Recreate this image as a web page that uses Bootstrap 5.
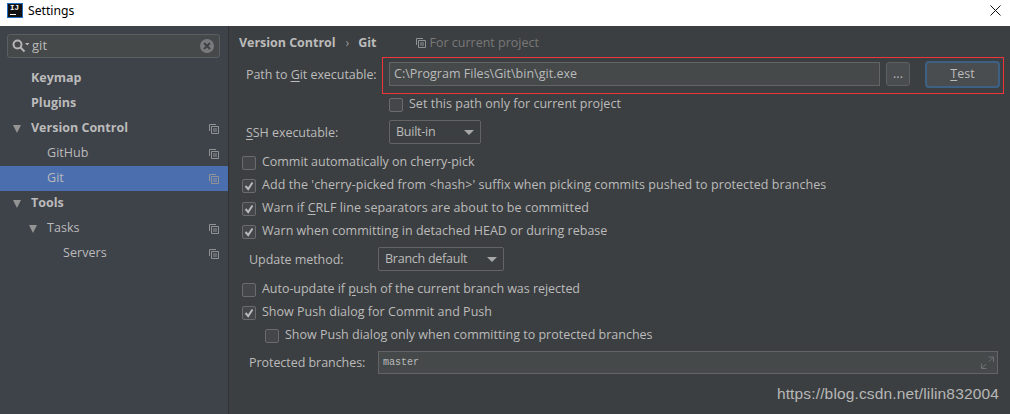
<!DOCTYPE html>
<html lang="en">
<head>
<meta charset="utf-8">
<title>Settings</title>
<link href="https://cdn.jsdelivr.net/npm/bootstrap@5.3.0/dist/css/bootstrap.min.css" rel="stylesheet">
<style>
html,body{width:1010px;height:414px;overflow:hidden;margin:0;background:#3c3f41;font-family:"Open Sans","Noto Sans",sans-serif;font-size:12.5px;color:#bbb;letter-spacing:.02px}
u{text-underline-offset:2px}
.win{width:1010px;height:414px}
.titlebar{height:26px;background:#fff;color:#000;padding:0 0 5px 7px;font-size:12.2px;font-family:"Noto Sans",sans-serif;letter-spacing:0}
.titletext{margin-top:2px}
.ijlogo{width:16px;height:15px;background:#111;border:1px solid #1f6fc4;color:#fff;font:bold 7.5px/8px "Liberation Mono",monospace;padding-left:2px;margin-right:5px;letter-spacing:0}
.ijlogo i{display:block;width:6px;height:1px;background:#fff;margin-top:2px}
.xbtn{margin-left:auto;margin-right:9px;width:11px;height:11px}
.body-row{height:388px}
.side{width:229px;background:#3e4249;border-right:1px solid #323232;flex:none}
.searchbox{margin:8px 8px 8px 7px;height:24px;width:213px;background:#45494a;border:1px solid #5c5f61;border-radius:3px;padding:0 5px 0 4px;font-size:13px}
.searchbox span{margin-left:3px}
.clr{margin-left:auto}
.tree-row{height:25px;padding-right:9px;letter-spacing:.05px}
.tree-row.bold{font-weight:700;letter-spacing:0}
.tree-row.sel{background:#4b6eaf}
.tw{width:31px;padding-left:13px;flex:none}
.tw2{width:47px;padding-left:29px;flex:none}
.tw3{width:63px;flex:none}
.proj{margin-left:auto}
.tri{width:0;height:0;border-left:4.5px solid transparent;border-right:4.5px solid transparent;border-top:8px solid #949494;display:block}
.mainp{flex:1;padding:0 7px 0 10px;min-width:0}
.crumb{height:31px;font-weight:700;padding-top:3px;letter-spacing:-.03px}
.crumb .sep{font-weight:400;margin:0 9px 0 10px;color:#999}
.crumb .forp{font-weight:400;color:#787878;margin-left:40px;letter-spacing:0}
.crumb .forp svg{margin-right:3px}
.pathrow{height:37px;padding-left:7px}
.pathlabel{width:136px;flex:none;letter-spacing:-.05px}
.redbox{flex:1;height:37px;border:1px solid #ee3539;padding:0 3px 3px 6px}
.fld{background:#45494a;border:1px solid #646464;height:24px}
.fldpath{width:491px;padding-left:4px;letter-spacing:.02px}
.dots{width:24px;height:24px;background:#4a4d4f;border:1px solid #5e6060;border-radius:3px;margin-left:6px;line-height:1}
.testbtn{width:75px;height:27px;margin-left:15px;background:#4a4d4f;border:2px solid #3d6185;border-radius:4px}
.r23{height:23px}
.r20{height:20px;padding:1px 0 0 150px}
.chk{width:14px;height:14px;border:1px solid #6b6b6b;background:#43474a;border-radius:2px;flex:none;margin-right:6px}
.chkrow{padding-left:3px}
.wider{letter-spacing:.065px}
.tight{letter-spacing:-.04px}
.combo{background:#3c3f41;border:1px solid #646464;border-radius:2px;height:24px;padding:0 6px;letter-spacing:-.25px}
.combo .tri{border-left-width:5px;border-right-width:5px;border-top-width:5px;border-top-color:#a8a8a8;margin-left:auto}
.combow1{width:92px}
.combow2{width:126px}
.sshrow{height:37px;padding:0 0 1px 7px}
.sshlab{width:143px;letter-spacing:-.05px;padding-top:2px}
.updrow{height:35px;padding:0 0 3px 10px}
.updlab{width:129px;letter-spacing:-.05px;padding-top:2px}
.nested{padding-left:26px;letter-spacing:0}
.protrow{height:33px;padding:0 5px 2px 10px}
.protlab{width:129px;letter-spacing:-.05px;padding-top:2px}
.mono{font:10px "Liberation Mono",monospace;letter-spacing:0;padding-left:4px;color:#bbb;height:23px}
.wm{height:20px;margin-top:4px;font:15.5px/20px "Liberation Sans",sans-serif;color:#b7b7b7;letter-spacing:.15px;margin-right:4px}
.expand{margin-left:auto;margin-right:3px}
.defs{width:0;height:0;display:block}
</style>
</head>
<body>
<svg class="defs">
  <symbol id="ico-proj" viewBox="0 0 10 10"><path d="M.5 7V.5H7M2.500 2.500h7v7h-7zM4 5h4M4 7h4" fill="none" stroke="#8f9396" stroke-width="1"/></symbol>
  <symbol id="ico-check" viewBox="0 0 12 12"><path d="M2.500 6l2.700 3L9.500 2.500" fill="none" stroke="#b8b8b8" stroke-width="2"/></symbol>
</svg>
<div class="win d-flex flex-column">
  <div class="titlebar d-flex align-items-center">
    <div class="ijlogo">IJ<i></i></div>
    <span class="titletext">Settings</span>
    <svg class="xbtn" viewBox="0 0 11 11"><path d="M.5.5l10 10M10.500.5l-10 10" stroke="#111" stroke-width="1"/></svg>
  </div>
  <div class="body-row d-flex">
    <div class="side">
      <div class="searchbox d-flex align-items-center">
        <svg width="17" height="14" viewBox="0 0 17 14"><circle cx="5.500" cy="5.500" r="4" fill="none" stroke="#b5b5b5" stroke-width="2"/><path d="M8.500 8.500l4 4" stroke="#b5b5b5" stroke-width="2"/><path d="M13 4h4.500l-2.200 2.500z" fill="#b5b5b5"/></svg>
        <span>git</span>
        <svg class="clr" width="14" height="14" viewBox="0 0 14 14"><circle cx="7" cy="7" r="7" fill="#787a7c"/><path d="M4 4l6 6M10 4l-6 6" stroke="#3f4244" stroke-width="2"/></svg>
      </div>
      <div class="tree-row bold d-flex align-items-center"><div class="tw"></div>Keymap</div>
      <div class="tree-row bold d-flex align-items-center"><div class="tw"></div>Plugins</div>
      <div class="tree-row bold d-flex align-items-center"><div class="tw"><span class="tri"></span></div>Version Control<svg class="proj" width="10" height="10"><use href="#ico-proj"/></svg></div>
      <div class="tree-row d-flex align-items-center"><div class="tw2"></div>GitHub<svg class="proj" width="10" height="10"><use href="#ico-proj"/></svg></div>
      <div class="tree-row sel d-flex align-items-center"><div class="tw2"></div>Git<svg class="proj" width="10" height="10"><use href="#ico-proj"/></svg></div>
      <div class="tree-row bold d-flex align-items-center"><div class="tw"><span class="tri"></span></div>Tools</div>
      <div class="tree-row d-flex align-items-center"><div class="tw2"><span class="tri"></span></div>Tasks<svg class="proj" width="10" height="10"><use href="#ico-proj"/></svg></div>
      <div class="tree-row d-flex align-items-center"><div class="tw3"></div>Servers<svg class="proj" width="10" height="10"><use href="#ico-proj"/></svg></div>
    </div>
    <div class="mainp d-flex flex-column">
      <div class="crumb d-flex align-items-center">Version Control<span class="sep">›</span>Git<span class="forp d-flex align-items-center"><svg width="10" height="10"><use href="#ico-proj"/></svg>For current project</span></div>
      <div class="pathrow d-flex align-items-center">
        <div class="pathlabel">Path to <u>G</u>it executable:</div>
        <div class="redbox d-flex align-items-center">
          <div class="fld fldpath d-flex align-items-center">C:\Program Files\Git\bin\git.exe</div>
          <div class="dots d-flex align-items-center justify-content-center">...</div>
          <div class="testbtn d-flex align-items-center justify-content-center"><span><u>T</u>est</span></div>
        </div>
      </div>
      <div class="r20 d-flex align-items-center"><span class="chk"></span><span>Set this path only for current project</span></div>
      <div class="sshrow d-flex align-items-center"><div class="sshlab"><u>S</u>SH executable:</div><div class="combo combow1 d-flex align-items-center">Built-in<span class="tri"></span></div></div>
      <div class="r23 d-flex align-items-center chkrow tight"><span class="chk"></span><span>Commit automatically on cherry-pick</span></div>
      <div class="r23 d-flex align-items-center chkrow wider"><svg class="chk" viewBox="0 0 12 12"><use href="#ico-check"/></svg><span>Add the 'cherry-picked from &lt;hash&gt;' suffix when picking commits pushed to protected branches</span></div>
      <div class="r23 d-flex align-items-center chkrow wider"><svg class="chk" viewBox="0 0 12 12"><use href="#ico-check"/></svg><span>Warn if <u>C</u>RLF line separators are about to be committed</span></div>
      <div class="r23 d-flex align-items-center chkrow"><svg class="chk" viewBox="0 0 12 12"><use href="#ico-check"/></svg><span>Warn when committing in detached HEAD or during rebase</span></div>
      <div class="updrow d-flex align-items-center"><div class="updlab">Update method:</div><div class="combo combow2 d-flex align-items-center">Branch default<span class="tri"></span></div></div>
      <div class="r23 d-flex align-items-center chkrow tight"><span class="chk"></span><span>Auto-update if <u>p</u>ush of the current branch was rejected</span></div>
      <div class="r23 d-flex align-items-center chkrow"><svg class="chk" viewBox="0 0 12 12"><use href="#ico-check"/></svg><span>Show Push dialog for Commit and Push</span></div>
      <div class="r23 d-flex align-items-center nested"><span class="chk"></span><span>Show Push dialog only when committing to protected branches</span></div>
      <div class="protrow d-flex align-items-center"><div class="protlab">Protected branches:</div><div class="fld mono d-flex align-items-center flex-fill">master<svg class="expand" width="13" height="13" viewBox="0 0 13 13"><path d="M7.500 1h5v5M12.500 1L8 5.500M5.500 12.500h-5v-5M.5 12.500L5 8" fill="none" stroke="#6d7173"/></svg></div></div>
      <div class="wm text-end">https://blog.csdn.net/lilin832004</div>
    </div>
  </div>
</div>
</body>
</html>
